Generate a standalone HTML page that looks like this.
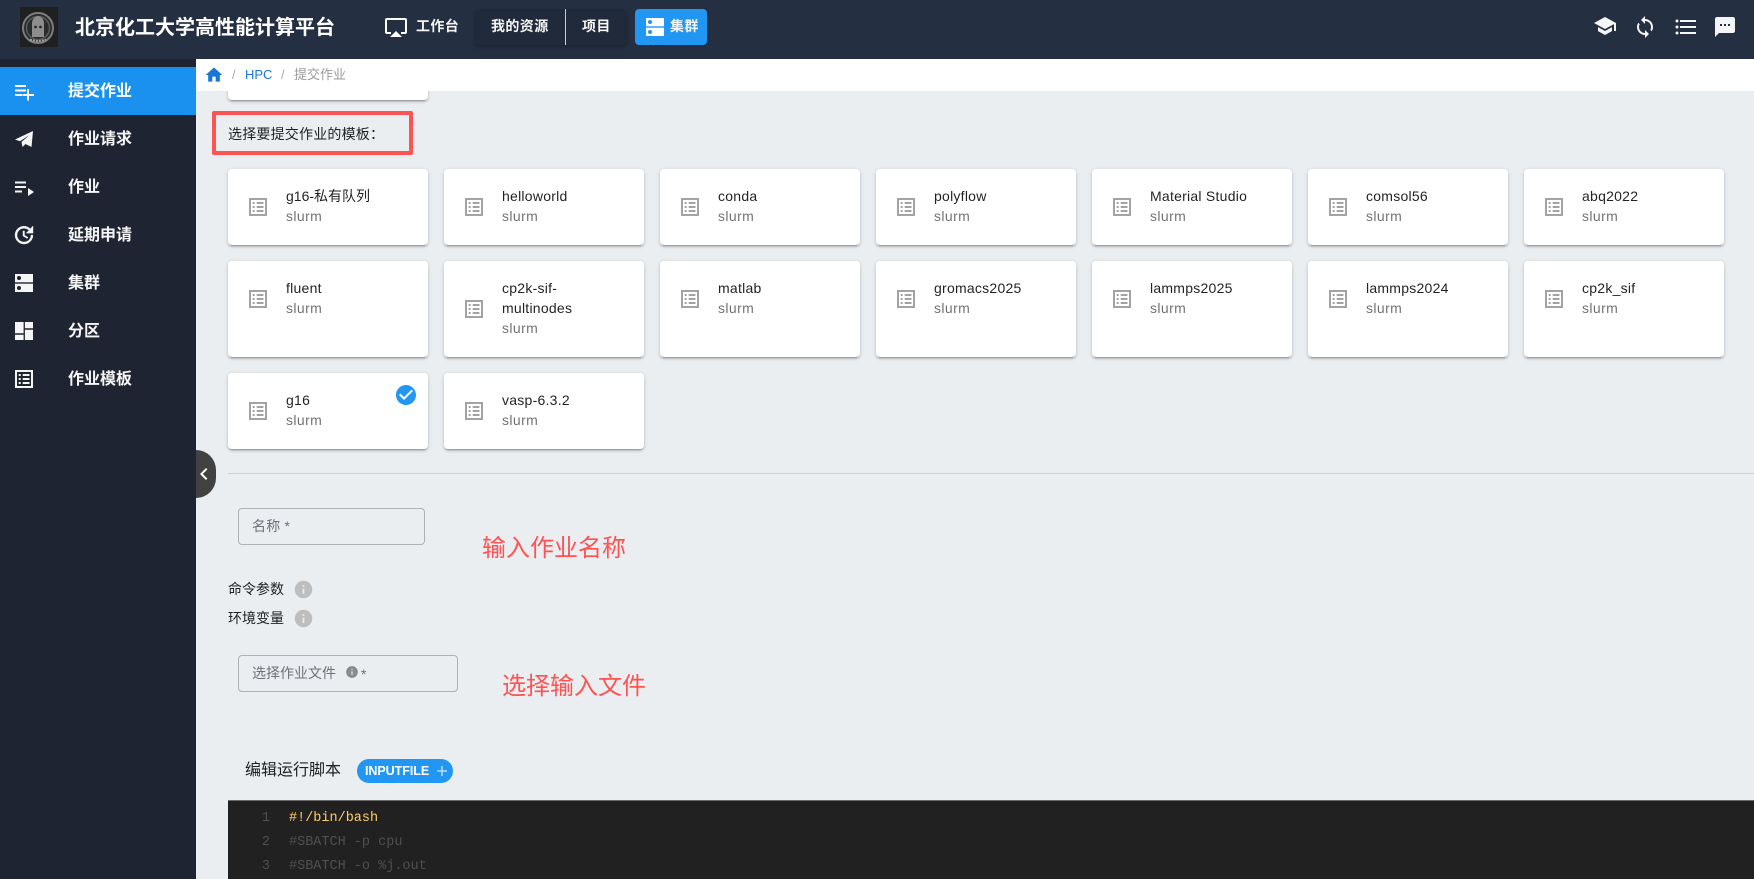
<!DOCTYPE html>
<html lang="zh"><head><meta charset="utf-8"><title>北京化工大学高性能计算平台</title>
<style>
*{box-sizing:border-box}
html,body{margin:0;padding:0;width:1754px;height:879px;overflow:hidden;background:#eaeef1}
body{position:relative;font-family:"Liberation Sans","Noto Sans CJK SC",sans-serif;font-size:14px;color:rgba(0,0,0,.87)}
.a{position:absolute;white-space:nowrap}
svg{position:absolute;display:block}
#hd{position:absolute;left:0;top:0;width:1754px;height:59px;background:#242f41}
#sb{position:absolute;left:0;top:59px;width:196px;height:820px;background:#1e2432}
#act{position:absolute;left:0;top:67px;width:196px;height:48px;background:#1a91ee}
.nav{position:absolute;left:68px;font-size:16px;line-height:24px;color:#f5f5f5;font-weight:bold}
.top{position:absolute;font-size:14px;font-weight:bold;color:#f5f5f5;line-height:20px;top:16px;letter-spacing:.4px}
#crumb{position:absolute;left:196px;top:59px;width:1558px;height:32px;background:#fff}
.card{position:absolute;width:200px;background:#fff;border-radius:4px;box-shadow:0 3px 1px -2px rgba(0,0,0,.2),0 2px 2px 0 rgba(0,0,0,.14),0 1px 5px 0 rgba(0,0,0,.12)}
.card svg{left:18px;fill:#a3a3a3}
.t{position:absolute;left:58px;top:17px;line-height:20px;font-size:14px;white-space:nowrap;color:rgba(0,0,0,.87);letter-spacing:.25px}
.s{color:rgba(0,0,0,.56);display:block;letter-spacing:.4px}
.fld{position:absolute;border:1px solid #aeb1b5;border-radius:4px}
.red{position:absolute;font-size:24px;line-height:32px;color:#ff5252;white-space:nowrap}
.cd{position:absolute;left:289px;font-family:"Liberation Mono",monospace;font-size:13.5px;line-height:24px;white-space:pre;color:#4f4f4f}
.ln{position:absolute;left:228px;width:42px;text-align:right;font-family:"Liberation Mono",monospace;font-size:13.5px;line-height:24px;color:#4f4f4f}
</style></head><body>
<svg width="0" height="0" style="position:absolute"><defs>
<symbol id="lst" viewBox="0 0 24 24"><path d="M3 3H21V21H3V3M5 5V19H19V5H5M6.7 7H8.7V9H6.7V7M10.7 7H17.5V9H10.7V7M6.7 11H8.7V13H6.7V11M10.7 11H17.5V13H10.7V11M6.7 15H8.7V17H6.7V15M10.7 15H17.5V17H10.7V15Z" fill-rule="evenodd"/></symbol>
</defs></svg>

<div id="hd"></div>
<div style="position:absolute;left:20px;top:7px;width:38px;height:40px;background:#1f2120"></div>
<svg style="left:20px;top:7px" width="38" height="40" viewBox="0 0 38 40"><circle cx="18" cy="21" r="15" fill="#2a2b2b" stroke="#7d7d7d" stroke-width="2"/><circle cx="18" cy="21" r="11.5" fill="none" stroke="#5c5c5c" stroke-width="1.5"/><path d="M12 30V17Q12 10 18 9Q24 10 24 17V30Z" fill="#8d8d8d"/><circle cx="15.5" cy="20" r="1.4" fill="#2a2b2b"/><circle cx="20.5" cy="20" r="1.4" fill="#2a2b2b"/><path d="M10 32.5Q18 35.5 26 32.5" fill="none" stroke="#a5a5a5" stroke-width="2" stroke-dasharray="2 1"/></svg>
<div class="a" style="left:75px;top:14px;font-size:20px;line-height:28px;font-weight:bold;color:#fff">北京化工大学高性能计算平台</div>
<svg style="left:384px;top:15px" width="24" height="24" viewBox="0 0 24 24" fill="#fff"><path d="M6,22H18L12,16M21,3H3A2,2 0 0,0 1,5V17A2,2 0 0,0 3,19H7V17H3V5H21V17H17V19H21A2,2 0 0,0 23,17V5A2,2 0 0,0 21,3Z"/></svg>
<div class="top" style="left:416px">工作台</div>
<div style="position:absolute;left:475px;top:9px;width:152px;height:36px;background:#212a3a;border-radius:4px;box-shadow:0 2px 3px rgba(0,0,0,.25)"></div>
<div class="top" style="left:491px">我的资源</div>
<div style="position:absolute;left:565px;top:9px;width:1px;height:36px;background:#c9ccd1"></div>
<div class="top" style="left:582px">项目</div>
<div style="position:absolute;left:635px;top:9px;width:72px;height:36px;background:#2196f3;border-radius:4px"></div>
<svg style="left:643px;top:15px" width="24" height="24" viewBox="0 0 24 24"><rect x="3" y="3" width="18" height="8.3" fill="#fff"/><rect x="3" y="12.7" width="18" height="8.3" fill="#fff"/><circle cx="7" cy="7" r="2" fill="#2196f3"/><circle cx="7" cy="17" r="2" fill="#2196f3"/></svg>
<div class="top" style="left:670px">集群</div>

<svg style="left:1593px;top:14px" width="24" height="24" viewBox="0 0 24 24" fill="#f5f5f5"><path d="M12,3L1,9L12,15L21,10.09V17H23V9M5,13.18V17.18L12,21L19,17.18V13.18L12,17L5,13.18Z"/></svg>
<svg style="left:1633px;top:15px" width="24" height="24" viewBox="0 0 24 24" fill="#f5f5f5"><path d="M12,18A6,6 0 0,1 6,12C6,11 6.25,10.03 6.7,9.2L5.24,7.74C4.46,8.97 4,10.43 4,12A8,8 0 0,0 12,20V23L16,19L12,15M12,4V1L8,5L12,9V6A6,6 0 0,1 18,12C18,13 17.75,13.97 17.3,14.8L18.76,16.26C19.54,15.03 20,13.57 20,12A8,8 0 0,0 12,4Z"/></svg>
<svg style="left:1673px;top:15px" width="24" height="24" viewBox="0 0 24 24" fill="#f5f5f5"><path d="M7,5H23V7H7V5M7,13V11H23V13H7M4,4.5A1.5,1.5 0 0,1 5.5,6A1.5,1.5 0 0,1 4,7.5A1.5,1.5 0 0,1 2.5,6A1.5,1.5 0 0,1 4,4.5M4,10.5A1.5,1.5 0 0,1 5.5,12A1.5,1.5 0 0,1 4,13.5A1.5,1.5 0 0,1 2.5,12A1.5,1.5 0 0,1 4,10.5M7,19V17H23V19H7M4,16.5A1.5,1.5 0 0,1 5.5,18A1.5,1.5 0 0,1 4,19.5A1.5,1.5 0 0,1 2.5,18A1.5,1.5 0 0,1 4,16.5Z"/></svg>
<svg style="left:1713px;top:15px" width="24" height="24" viewBox="0 0 24 24" fill="#f5f5f5"><path d="M20,2H4C2.9,2 2,2.9 2,4V22L6,18H20C21.1,18 22,17.1 22,16V4C22,2.9 21.1,2 20,2M17,11H15V9H17V11M13,11H11V9H13V11M9,11H7V9H9V11Z" fill-rule="evenodd"/></svg>

<div id="sb"></div>
<div id="act"></div>
<div class="nav" style="top:80px;color:#fff">提交作业</div>
<div class="nav" style="top:128px">作业请求</div>
<div class="nav" style="top:176px">作业</div>
<div class="nav" style="top:224px">延期申请</div>
<div class="nav" style="top:272px">集群</div>
<div class="nav" style="top:320px">分区</div>
<div class="nav" style="top:368px">作业模板</div>
<svg style="left:12px;top:79px" width="24" height="24" viewBox="0 0 24 24" fill="#fff"><path d="M3,6H14V8H3V6M3,10.5H14V12.5H3V10.5M3,15H10V17H3V15M15,10H17V15H22V17H17V21.5H15V17H10.5V15H15V10Z"/></svg>
<svg style="left:12px;top:127px" width="24" height="24" viewBox="0 0 24 24" fill="#f5f5f5"><path d="M3,12.5L21,4L19.5,20L13.5,17L10.5,20L9.5,15L17.5,8L8,14.2Z"/></svg>
<svg style="left:12px;top:175px" width="24" height="24" viewBox="0 0 24 24" fill="#f5f5f5"><path d="M3,6.5H14V8.5H3V6.5M3,11H14V13H3V11M3,15.5H10V17.5H3V15.5M16,13V21L22,17L16,13Z"/></svg>
<svg style="left:12px;top:223px" width="24" height="24" viewBox="0 0 24 24" fill="#f5f5f5" stroke="#f5f5f5" stroke-width=".4"><path d="M21,10.12H14.22L16.96,7.3C14.23,4.6 9.81,4.5 7.08,7.2C4.35,9.91 4.35,14.28 7.08,17C9.81,19.7 14.23,19.7 16.96,17C18.32,15.65 19,14.08 19,12.1H21C21,14.08 20.12,16.65 18.36,18.39C14.85,21.87 9.15,21.87 5.64,18.39C2.14,14.92 2.11,9.28 5.62,5.81C9.13,2.34 14.76,2.34 18.27,5.81L21,3V10.12M12.5,8V12.25L16,14.33L15.28,15.54L11,13V8H12.5Z"/></svg>
<svg style="left:12px;top:271px" width="24" height="24" viewBox="0 0 24 24"><rect x="3" y="3" width="18" height="8.3" fill="#f5f5f5"/><rect x="3" y="12.7" width="18" height="8.3" fill="#f5f5f5"/><circle cx="7" cy="7" r="2" fill="#1e2432"/><circle cx="7" cy="17" r="2" fill="#1e2432"/></svg>
<svg style="left:12px;top:319px" width="24" height="24" viewBox="0 0 24 24" fill="#f5f5f5"><path d="M3,14.2H11.6V3H3V14.2M3,21H11.6V15.7H3V21M12.9,21H21V10.8H12.9V21M12.9,3V9.3H21V3H12.9Z"/></svg>
<svg style="left:12px;top:367px;fill:#f5f5f5" width="24" height="24"><use href="#lst"/></svg>

<div class="card" style="left:228px;top:60px;height:40px"></div>
<div id="crumb"></div>
<svg style="left:204px;top:65px" width="20" height="20" viewBox="0 0 24 24" fill="#1976d2"><path d="M10,20V14H14V20H19V12H22L12,3L2,12H5V20H10Z"/></svg>
<div class="a" style="left:232px;top:66px;line-height:18px;font-size:13px;color:#aaa">/</div>
<div class="a" style="left:245px;top:66px;line-height:18px;font-size:13px;color:#1976d2">HPC</div>
<div class="a" style="left:281px;top:66px;line-height:18px;font-size:13px;color:#aaa">/</div>
<div class="a" style="left:294px;top:66px;line-height:18px;font-size:13px;color:#9a9a9a">提交作业</div>

<div style="position:absolute;left:212px;top:111px;width:201px;height:44px;border:4px solid #ff5252;border-radius:2px"></div>
<div class="a" style="left:228px;top:124px;line-height:20px;font-size:14px;letter-spacing:.2px">选择要提交作业的模板：</div>

<div class="card" style="left:228px;top:169px;height:76px"><svg style="top:26px" width="24" height="24"><use href="#lst"/></svg><div class="t" style="letter-spacing:0">g16-私有队列<span class="s">slurm</span></div></div>
<div class="card" style="left:444px;top:169px;height:76px"><svg style="top:26px" width="24" height="24"><use href="#lst"/></svg><div class="t">helloworld<span class="s">slurm</span></div></div>
<div class="card" style="left:660px;top:169px;height:76px"><svg style="top:26px" width="24" height="24"><use href="#lst"/></svg><div class="t">conda<span class="s">slurm</span></div></div>
<div class="card" style="left:876px;top:169px;height:76px"><svg style="top:26px" width="24" height="24"><use href="#lst"/></svg><div class="t">polyflow<span class="s">slurm</span></div></div>
<div class="card" style="left:1092px;top:169px;height:76px"><svg style="top:26px" width="24" height="24"><use href="#lst"/></svg><div class="t">Material Studio<span class="s">slurm</span></div></div>
<div class="card" style="left:1308px;top:169px;height:76px"><svg style="top:26px" width="24" height="24"><use href="#lst"/></svg><div class="t">comsol56<span class="s">slurm</span></div></div>
<div class="card" style="left:1524px;top:169px;height:76px"><svg style="top:26px" width="24" height="24"><use href="#lst"/></svg><div class="t">abq2022<span class="s">slurm</span></div></div>

<div class="card" style="left:228px;top:261px;height:96px"><svg style="top:26px" width="24" height="24"><use href="#lst"/></svg><div class="t">fluent<span class="s">slurm</span></div></div>
<div class="card" style="left:444px;top:261px;height:96px"><svg style="top:36px" width="24" height="24"><use href="#lst"/></svg><div class="t">cp2k-sif-<br>multinodes<span class="s">slurm</span></div></div>
<div class="card" style="left:660px;top:261px;height:96px"><svg style="top:26px" width="24" height="24"><use href="#lst"/></svg><div class="t">matlab<span class="s">slurm</span></div></div>
<div class="card" style="left:876px;top:261px;height:96px"><svg style="top:26px" width="24" height="24"><use href="#lst"/></svg><div class="t">gromacs2025<span class="s">slurm</span></div></div>
<div class="card" style="left:1092px;top:261px;height:96px"><svg style="top:26px" width="24" height="24"><use href="#lst"/></svg><div class="t">lammps2025<span class="s">slurm</span></div></div>
<div class="card" style="left:1308px;top:261px;height:96px"><svg style="top:26px" width="24" height="24"><use href="#lst"/></svg><div class="t">lammps2024<span class="s">slurm</span></div></div>
<div class="card" style="left:1524px;top:261px;height:96px"><svg style="top:26px" width="24" height="24"><use href="#lst"/></svg><div class="t">cp2k_sif<span class="s">slurm</span></div></div>

<div class="card" style="left:228px;top:373px;height:76px"><svg style="top:26px" width="24" height="24"><use href="#lst"/></svg><div class="t">g16<span class="s">slurm</span></div></div>
<div class="card" style="left:444px;top:373px;height:76px"><svg style="top:26px" width="24" height="24"><use href="#lst"/></svg><div class="t">vasp-6.3.2<span class="s">slurm</span></div></div>
<svg style="left:394px;top:383px" width="24" height="24" viewBox="0 0 24 24"><circle cx="12" cy="12" r="9" fill="#fff"/><path fill="#2196f3" d="M12 2C6.5 2 2 6.5 2 12S6.5 22 12 22 22 17.5 22 12 17.5 2 12 2M10 17L5 12L6.41 10.59L10 14.17L17.59 6.58L19 8L10 17Z"/></svg>

<div style="position:absolute;left:228px;top:473px;width:1526px;height:1px;background:#cdd0d4"></div>
<div style="position:absolute;left:196px;top:450px;width:20px;height:48px;background:#424242;border-radius:0 24px 24px 0/0 24px 24px 0"></div>
<svg style="left:192px;top:462px" width="24" height="24" viewBox="0 0 24 24" fill="#fff"><path d="M15.41,16.58L10.83,12L15.41,7.41L14,6L8,12L14,18L15.41,16.58Z"/></svg>

<div class="fld" style="left:238px;top:508px;width:187px;height:37px"></div>
<div class="a" style="left:252px;top:516px;line-height:20px;color:#6e7278;letter-spacing:.2px">名称 *</div>
<div class="red" style="left:482px;top:533px">输入作业名称</div>

<div class="a" style="left:228px;top:579px;line-height:20px">命令参数</div>
<svg style="left:293px;top:579px;fill:#bdbdbd" width="21" height="21" viewBox="0 0 24 24"><path fill-rule="evenodd" d="M13,9H11V7H13V9M13,17H11V11H13V17M12,2A10,10 0 0,0 2,12A10,10 0 0,0 12,22A10,10 0 0,0 22,12A10,10 0 0,0 12,2Z"/></svg>
<div class="a" style="left:228px;top:608px;line-height:20px">环境变量</div>
<svg style="left:293px;top:608px;fill:#bdbdbd" width="21" height="21" viewBox="0 0 24 24"><path fill-rule="evenodd" d="M13,9H11V7H13V9M13,17H11V11H13V17M12,2A10,10 0 0,0 2,12A10,10 0 0,0 12,22A10,10 0 0,0 22,12A10,10 0 0,0 12,2Z"/></svg>

<div class="fld" style="left:238px;top:655px;width:220px;height:37px"></div>
<div class="a" style="left:252px;top:663px;line-height:20px;color:#6e7278">选择作业文件</div>
<svg style="left:345px;top:665px;fill:#8a8a8a" width="14" height="14" viewBox="0 0 24 24"><path fill-rule="evenodd" d="M13,9H11V7H13V9M13,17H11V11H13V17M12,2A10,10 0 0,0 2,12A10,10 0 0,0 12,22A10,10 0 0,0 22,12A10,10 0 0,0 12,2Z"/></svg>
<div class="a" style="left:361px;top:664px;line-height:20px;color:#6e7278">*</div>
<div class="red" style="left:502px;top:671px">选择输入文件</div>

<div class="a" style="left:245px;top:759px;line-height:24px;font-size:16px">编辑运行脚本</div>
<div style="position:absolute;left:357px;top:759px;width:96px;height:24px;border-radius:12px;background:#2196f3"></div>
<div class="a" style="left:365px;top:761px;line-height:20px;font-size:12.5px;font-weight:bold;color:#fff;letter-spacing:-.05px">INPUTFILE</div>
<svg style="left:434px;top:763px" width="16" height="16" viewBox="0 0 16 16"><path d="M3 8H13M8 3V13" stroke="#b5dcfb" stroke-width="1.6"/></svg>

<div style="position:absolute;left:228px;top:800px;width:1526px;height:79px;background:#212121;border-top:1px solid #6a6a6a"></div>
<div class="ln" style="top:807px">1</div><div class="cd" style="top:807px;color:#ffcb6b">#!/bin/bash</div>
<div class="ln" style="top:831px">2</div><div class="cd" style="top:831px">#SBATCH -p cpu</div>
<div class="ln" style="top:855px">3</div><div class="cd" style="top:855px">#SBATCH -o %j.out</div>
</body></html>
